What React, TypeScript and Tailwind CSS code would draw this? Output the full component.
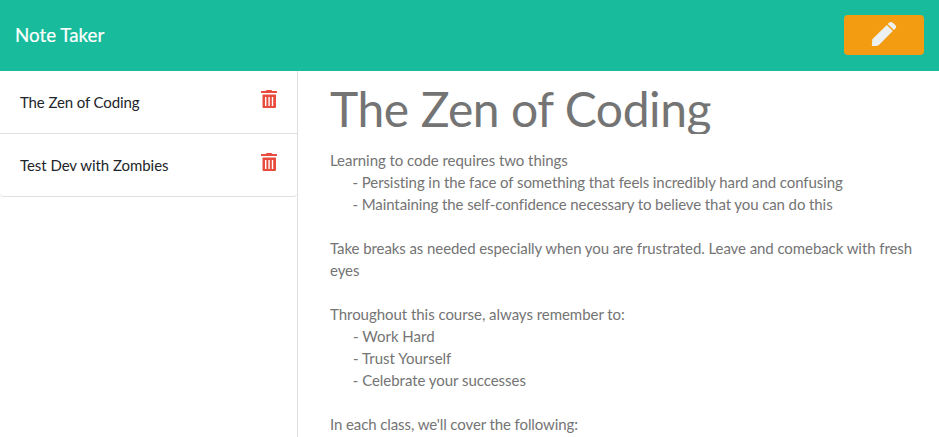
const notes = [
  { title: 'The Zen of Coding', tracking: 'tracking-[-0.12px]' },
  { title: 'Test Dev with Zombies', tracking: 'tracking-[-0.05px]' },
];

const lines = [
  { text: 'Learning to code requires two things', tracking: 'tracking-[-0.05px]' },
  { text: '      - Persisting in the face of something that feels incredibly hard and confusing', tracking: 'tracking-[-0.085px]' },
  { text: '      - Maintaining the self-confidence necessary to believe that you can do this', tracking: 'tracking-[-0.095px]' },
  { text: '', tracking: '' },
  { text: 'Take breaks as needed especially when you are frustrated. Leave and comeback with fresh eyes', tracking: 'tracking-[-0.08px]' },
  { text: '', tracking: '' },
  { text: 'Throughout this course, always remember to:', tracking: 'tracking-[-0.04px]' },
  { text: '      - Work Hard', tracking: '' },
  { text: '      - Trust Yourself', tracking: '' },
  { text: '      - Celebrate your successes', tracking: 'tracking-[-0.04px]' },
  { text: '', tracking: '' },
  { text: "In each class, we'll cover the following:", tracking: 'tracking-[-0.1px]' },
];

function Trash() {
  return (
    <svg viewBox="0 0 16 18" className="-mt-px h-[18px] w-4 fill-[#e74c3c]">
      <path
        d="M5.500 0h5l.7 1H15.500q.5 0 .5.5V3H0V1.500Q0 1 .5 1h4.300zM1.500 4.400h13.500V17q0 1-1 1H2.500q-1 0-1-1zM4 7v9h1.400V7zm3.400 0v9h1.400V7zm3.400 0v9h1.400V7z"
        fillRule="evenodd"
      />
    </svg>
  );
}

export default function App() {
  return (
    <div className="flex h-screen flex-col overflow-hidden bg-white font-['Lato',sans-serif] text-[15px] leading-[22px]">
      <header className="flex h-[71px] shrink-0 items-start justify-between bg-[#18bc9c] px-[15px] pt-[15px]">
        <span className="text-[18.75px] leading-10 text-white [-webkit-text-stroke:0.2px_white]">Note Taker</span>
        <button className="flex h-10 w-20 items-start justify-center rounded bg-[#f39c12] pt-[7px]">
          <svg viewBox="0 0 24 24" className="h-6 w-6 overflow-visible fill-[#ecf0f1]">
            <path d="M.3 17.300 14.800 3l6 6L7.200 22.700 4.800 24H-.2zM15.700 2l1.300-1.300Q18.500-.5 20.500.4L23.800 3.600Q24.800 5 23.500 6.500L21.900 8z" />
          </svg>
        </button>
      </header>
      <div className="flex min-h-0 flex-1">
        <aside className="w-[298px] shrink-0 border-r border-[#dfdfdf]">
          {notes.map((n) => (
            <div key={n.title} className="flex h-[63px] justify-between border-b border-[#dfdfdf] px-5 pt-5 text-[#212529] last:rounded-b">
              <span className={n.tracking}>{n.title}</span>
              <Trash />
            </div>
          ))}
        </aside>
        <main className="min-w-0 flex-1 pl-8 pr-5">
          <h1 className="mt-2 mb-[15px] h-[55px] overflow-hidden text-[48px] leading-[60px] tracking-[-0.43px] text-[#747474]">The Zen of Coding</h1>
          <div className="whitespace-pre-wrap text-[#747474]">
            {lines.map((l, i) => (
              <p key={i} className={`min-h-[22px] ${l.tracking}`}>{l.text}</p>
            ))}
          </div>
        </main>
      </div>
    </div>
  );
}
